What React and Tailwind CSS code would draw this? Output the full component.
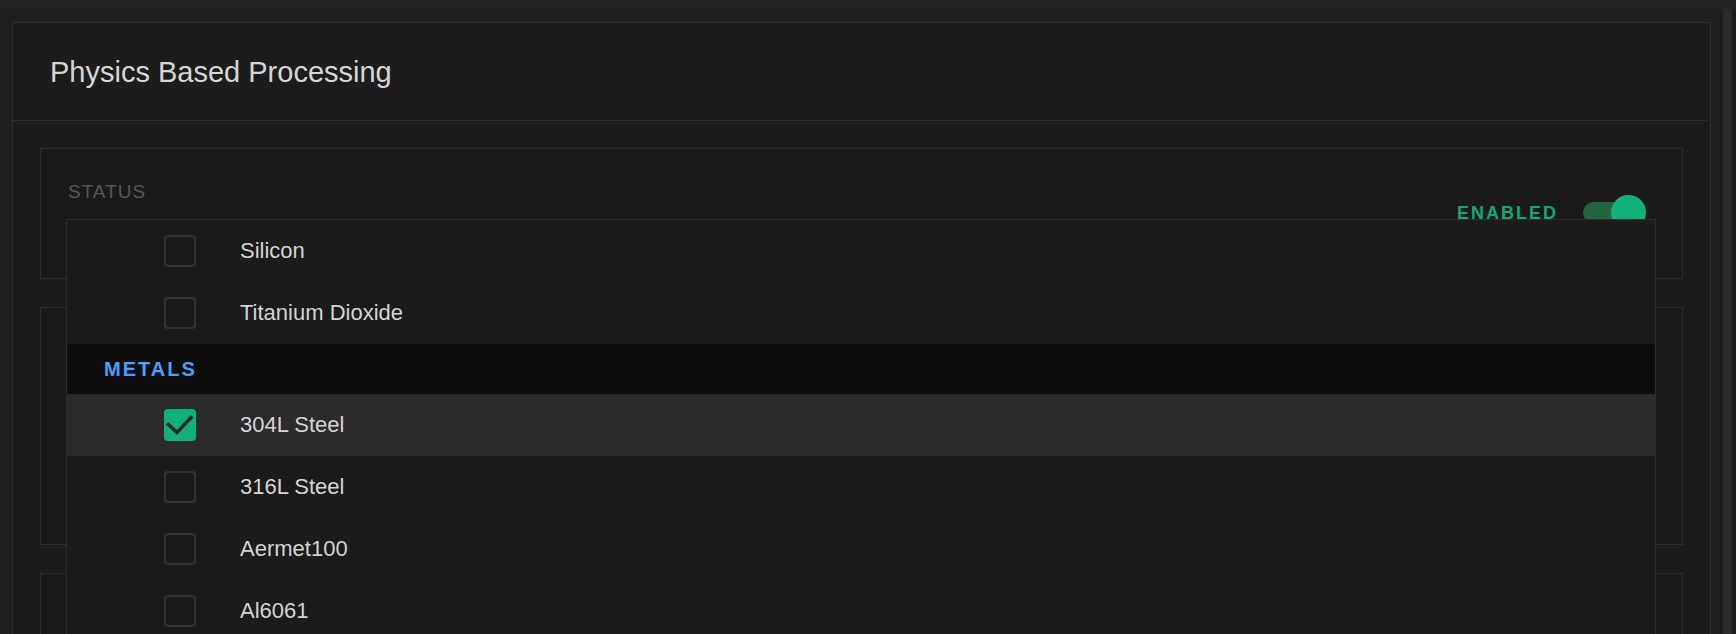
import React from "react";

const items = [
  { type: "item", label: "Silicon" },
  { type: "item", label: "Titanium Dioxide" },
  { type: "group", label: "METALS" },
  { type: "item", label: "304L Steel", checked: true },
  { type: "item", label: "316L Steel" },
  { type: "item", label: "Aermet100" },
  { type: "item", label: "Al6061" },
];

function Checkbox({ checked }) {
  if (checked) {
    return (
      <div className="w-[32px] h-[32px] rounded-[4px] bg-[#10b27a] flex items-center justify-center">
        <svg width="32" height="32" viewBox="0 0 32 32" fill="none">
          <path
            d="M4.5 15.5 L13 23.5 L27 8.5"
            stroke="#262626"
            strokeWidth="3.6"
            strokeLinecap="square"
          />
        </svg>
      </div>
    );
  }
  return <div className="w-[32px] h-[32px] rounded-[4px] border-2 border-[#333333]" />;
}

function Toggle() {
  return (
    <div className="relative w-[63px] h-[35px]">
      <div className="absolute left-0 top-[7px] h-[21px] w-[56px] rounded-full bg-[#22653f]" />
      <div className="absolute right-0 top-0 w-[35px] h-[35px] rounded-full bg-[#10b27a]" />
    </div>
  );
}

export default function App() {
  return (
    <div className="relative w-[1736px] h-[634px] overflow-hidden bg-[#1f1f1f] font-['Liberation_Sans',Arial,sans-serif]">
      <div className="h-[9px] bg-[#232323]" />
      <div className="flex">
        <div className="flex-1 pl-[12px] pr-[12px] pt-[13px]">
          <div className="border border-[#2e2e2e] bg-[#1c1c1c]">
            {/* Header */}
            <div className="h-[98px] border-b border-[#2e2e2e] flex items-center pl-[37px] pt-[2px]">
              <h1 className="text-[29px] text-[#d6d6d6] leading-none">Physics Based Processing</h1>
            </div>

            {/* Body */}
            <div className="p-[27px] flex flex-col gap-[28px]">
              <div className="h-[131px] border border-[#2e2e2e] bg-[#1a1a1a] flex items-start justify-between pl-[27px] pr-[36px] pt-[33px]">
                <span className="text-[19px] leading-none tracking-[1px] text-[#575757]">STATUS</span>
                <div className="mt-[13px] flex items-center gap-[25px]">
                  <span className="text-[18px] leading-none font-bold tracking-[2px] text-[#10a874]">ENABLED</span>
                  <Toggle />
                </div>
              </div>
              <div className="h-[238px] border border-[#2e2e2e] bg-[#1a1a1a]" />
              <div className="h-[200px] border border-[#2e2e2e] bg-[#1a1a1a]" />
            </div>
          </div>
        </div>
        {/* Scrollbar */}
        <div className="w-[9px] mr-[4px] h-[625px] bg-[#2b2b2b]" />
      </div>

      {/* Dropdown menu */}
      <div className="absolute left-[66px] top-[219px] w-[1590px] border border-[#2e2e2e] bg-[#1b1b1b]">
        {items.map((it) =>
          it.type === "group" ? (
            <div key={it.label} className="h-[50px] bg-[#0e0e0e] flex items-center pl-[37px]">
              <span className="text-[20px] font-bold tracking-[2px] text-[#4a9fff] leading-none">{it.label}</span>
            </div>
          ) : (
            <div
              key={it.label}
              className={`h-[62px] flex items-center pl-[97px] gap-[44px] ${it.checked ? "bg-[#2b2b2b]" : ""}`}
            >
              <Checkbox checked={it.checked} />
              <span className="text-[22px] text-[#d4d4d4] leading-none">{it.label}</span>
            </div>
          )
        )}
      </div>
    </div>
  );
}
